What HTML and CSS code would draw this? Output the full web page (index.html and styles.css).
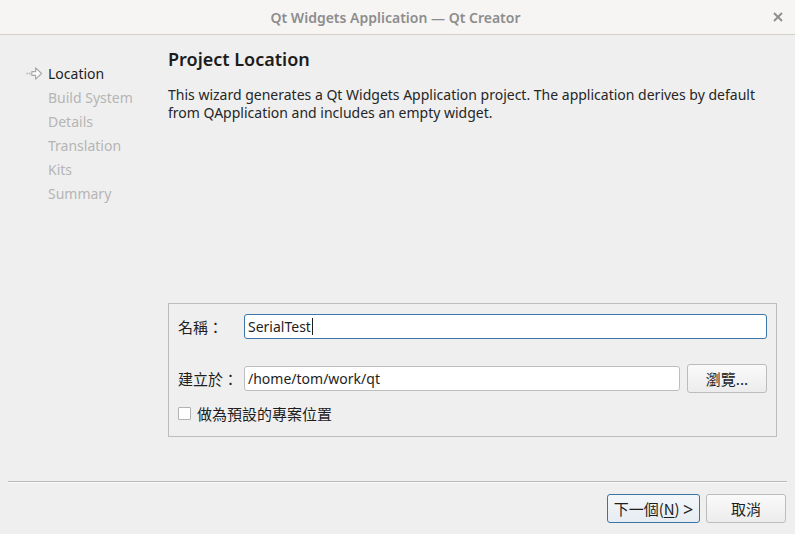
FILE: index.html
```html
<!DOCTYPE html>
<html lang="zh-Hant">
<head>
<meta charset="utf-8">
<title>Qt Widgets Application — Qt Creator</title>
<link rel="stylesheet" href="styles.css">
</head>
<body>
<div class="window">
  <header class="titlebar">
    <span class="title">Qt Widgets Application — Qt Creator</span>
    <span class="close">
      <svg width="10" height="10" viewBox="0 0 10 10"><path d="M1 1 L9 9 M9 1 L1 9" stroke="#8c8c8c" stroke-width="1.8" fill="none"/></svg>
    </span>
  </header>
  <div class="main">
    <nav class="steps">
      <div class="step current">
        <svg class="arrow" width="17" height="15" viewBox="0 0 17 15">
          <circle cx="1.2" cy="7.5" r="0.9" fill="#c2c2c2"/>
          <circle cx="3.6" cy="7.5" r="1" fill="#b3b3b3"/>
          <path d="M5.8 5.6 H9.6 V1.8 L15.6 7.5 L9.6 13.2 V9.4 H5.8 Z" fill="#fbfbfb" stroke="#a6a6a6" stroke-width="1.1" stroke-linejoin="round"/>
        </svg>
        <span>Location</span>
      </div>
      <div class="step">Build System</div>
      <div class="step">Details</div>
      <div class="step">Translation</div>
      <div class="step">Kits</div>
      <div class="step">Summary</div>
    </nav>
    <section class="content">
      <h1 class="heading">Project Location</h1>
      <p class="desc">This wizard generates a Qt Widgets Application project. The application derives by default from QApplication and includes an empty widget.</p>
      <div class="group">
        <div class="row row-name">
          <label class="label">名稱：</label>
          <div class="input focus">SerialTest<span class="caret"></span></div>
        </div>
        <div class="row row-path">
          <label class="label">建立於：</label>
          <div class="input path">/home/tom/work/qt</div>
          <button class="btn browse">瀏覽...</button>
        </div>
        <div class="row row-check">
          <span class="checkbox"></span>
          <span class="check-label">做為預設的專案位置</span>
        </div>
      </div>
    </section>
  </div>
  <footer class="footer">
    <div class="sep"></div>
    <div class="buttons">
      <button class="btn next">下一個(<u>N</u>) <span class="gt">&gt;</span></button>
      <button class="btn cancel">取消</button>
    </div>
  </footer>
</div>
</body>
</html>
```

FILE: styles.css
```css
* { box-sizing: border-box; }
html, body {
  margin: 0;
  padding: 0;
}
body {
  background: #efefef;
  font-family: "Noto Sans", "Noto Sans CJK TC", sans-serif;
  color: #232323;
}
.window {
  width: 795px;
  height: 534px;
  display: flex;
  flex-direction: column;
}
.titlebar {
  height: 35px;
  flex: none;
  background: #f6f5f4;
  border-bottom: 1px solid #d3cfcb;
  display: flex;
  align-items: center;
  justify-content: center;
  position: relative;
}
.title {
  font-size: 14px;
  font-weight: 600;
  color: #8d8d8d;
  margin-left: -4px;
}
.close {
  position: absolute;
  right: 12px;
  top: 12px;
  width: 10px;
  height: 10px;
  display: flex;
}
.main {
  flex: 1;
  display: flex;
  min-height: 0;
}
.steps {
  width: 168px;
  flex: none;
  padding-top: 27px;
  padding-left: 48px;
}
.step {
  height: 24px;
  line-height: 24px;
  font-size: 14px;
  color: #b5b5b5;
}
.step.current {
  color: #1e1e1e;
  position: relative;
}
.arrow {
  position: absolute;
  left: -22px;
  top: 4px;
}
.content {
  flex: 1;
  display: flex;
  flex-direction: column;
  padding: 12px 18px 44px 0;
}
.heading {
  margin: 0;
  font-size: 18px;
  line-height: 24px;
  font-weight: 600;
  color: #1c1c1c;
}
.desc {
  margin: 15px 0 0;
  font-size: 14px;
  line-height: 18px;
  color: #262626;
  width: 600px;
}
.group {
  margin-top: auto;
  height: 134px;
  border: 1px solid #bcbcbc;
  padding: 10px 9px 0 9px;
  display: flex;
  flex-direction: column;
}
.row {
  display: flex;
  align-items: center;
}
.row-name { height: 25px; }
.row-path { height: 29px; margin-top: 25px; }
.row-check { height: 20px; margin-top: 10px; }
.label {
  width: 66px;
  flex: none;
  font-size: 15px;
  font-family: "Noto Sans CJK TC", sans-serif;
  color: #1e1e1e;
}
.input {
  height: 25px;
  background: #ffffff;
  border: 1px solid #bdbdbd;
  border-radius: 3px;
  font-size: 14px;
  line-height: 23px;
  padding-left: 3px;
  color: #1e1e1e;
  flex: 1;
  display: flex;
  align-items: center;
}
.input.focus {
  border-color: #3b77aa;
}
.caret {
  width: 1px;
  height: 17px;
  background: #1e1e1e;
  margin-left: 1px;
}
.btn {
  font-family: "Noto Sans CJK TC", "Noto Sans", sans-serif;
  font-size: 15px;
  color: #1e1e1e;
  background: linear-gradient(#fafafa, #ececec);
  border: 1px solid #bcbcbc;
  border-radius: 3px;
  height: 29px;
  padding: 0;
  cursor: default;
}
.browse {
  width: 80px;
  margin-left: 7px;
  flex: none;
}
.checkbox {
  width: 13px;
  height: 13px;
  background: #ffffff;
  border: 1px solid #b3b3b3;
  border-radius: 1px;
  flex: none;
}
.check-label {
  font-family: "Noto Sans CJK TC", sans-serif;
  font-size: 15px;
  margin-left: 6px;
  color: #1e1e1e;
}
.footer {
  flex: none;
  display: flex;
  flex-direction: column;
}
.sep {
  height: 1px;
  background: #bababa;
  margin: 0 8px;
  box-shadow: 0 1px 0 #fafafa;
}
.buttons {
  display: flex;
  justify-content: flex-end;
  gap: 6px;
  padding: 12px 9px 11px 0;
}
.next {
  width: 93px;
  border-color: #3a74a6;
  background: linear-gradient(#f4f7fa, #e6ecf2);
  white-space: nowrap;
}
.next u { text-underline-offset: 2px; }
.gt {
  font-family: "Noto Sans", sans-serif;
  font-size: 18px;
  line-height: 1;
  vertical-align: -1px;
}
.cancel {
  width: 80px;
}
```
